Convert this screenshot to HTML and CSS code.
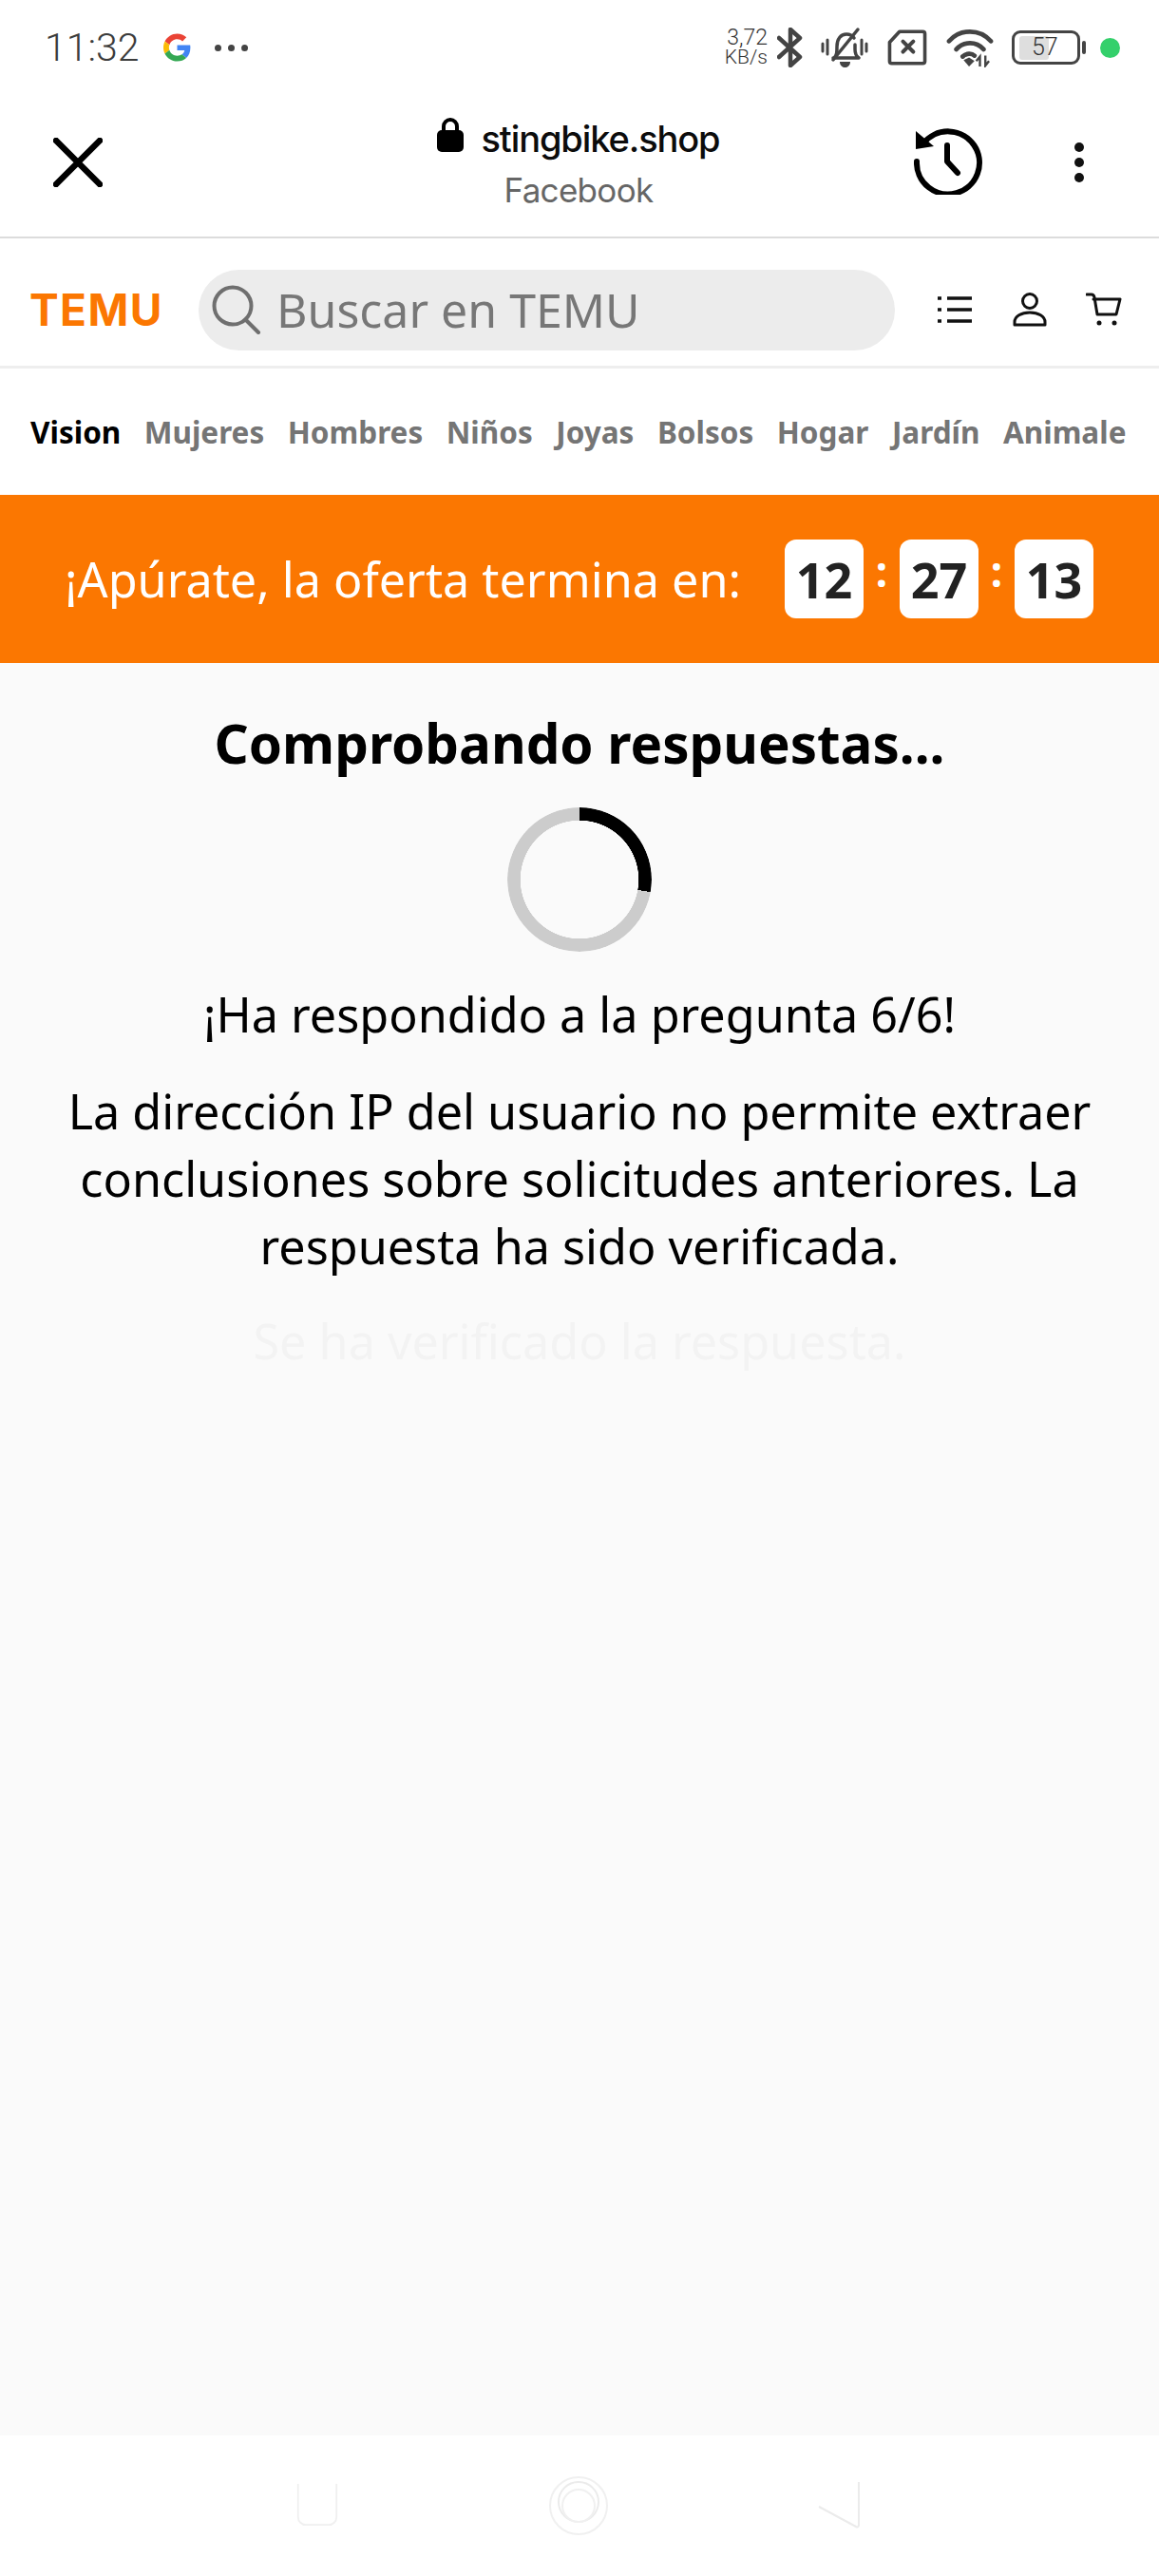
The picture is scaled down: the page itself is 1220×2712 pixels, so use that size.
FILE: index.html
```html
<!DOCTYPE html>
<html lang="es">
<head>
<meta charset="utf-8">
<title>TEMU</title>
<link rel="stylesheet" href="styles.css">
</head>
<body>
<div class="page">
  <div class="status">
    <div class="status-left">
      <span class="clock">11:32</span>
      <svg class="g-logo" viewBox="0 0 48 48"><path fill="#EA4335" d="M24 9.500c3.500 0 6.700 1.200 9.200 3.600l6.900-6.900C35.900 2.400 30.500 0 24 0 14.600 0 6.500 5.400 2.600 13.200l8 6.200C12.400 13.700 17.700 9.500 24 9.500z"/><path fill="#4285F4" d="M47 24.500c0-1.600-.1-3.100-.4-4.500H24v9h12.900c-.6 3-2.200 5.400-4.700 7.100l7.700 6C44.400 38.400 47 32 47 24.500z"/><path fill="#FBBC05" d="M10.500 28.600c-.5-1.400-.8-3-.8-4.600s.3-3.200.8-4.600l-8-6.200C.9 16.500 0 20.100 0 24s.9 7.500 2.600 10.800l7.900-6.200z"/><path fill="#34A853" d="M24 48c6.500 0 11.900-2.100 15.900-5.900l-7.700-6c-2.200 1.500-4.900 2.300-8.200 2.300-6.300 0-11.600-4.200-13.500-9.900l-8 6.200C6.500 42.600 14.600 48 24 48z"/></svg>
      <span class="more-dots"><i></i><i></i><i></i></span>
    </div>
    <div class="status-right">
      <span class="speed"><span>3,72</span><span>KB/s</span></span>
      <svg class="i-bt" viewBox="0 0 28 42"><path d="M2 11l22 20-10 9V2l10 9L2 31" fill="none" stroke="#444" stroke-width="4.500" stroke-linejoin="round" stroke-linecap="round"/></svg>
      <svg class="i-bell" viewBox="0 0 50 44"><g fill="none" stroke="#444" stroke-linecap="round" stroke-linejoin="round"><path stroke-width="3.500" d="M14 33c3-3 3-6 3-12 0-8 4-13 10-13 4 0 6 1 8 4M36 19v5c0 4 1 7 4 9H13"/><path stroke-width="3.500" d="M13 35L39 3"/><path stroke-width="3" d="M2 18v8M7 14v15M48 18v8M43 14v15"/></g><path d="M20 37h11c0 4-3 6-5.500 6S20 41 20 37z" fill="#444"/></svg>
      <svg class="i-sim" viewBox="0 0 46 42"><path d="M14 2.500h27a2.500 2.500 0 0 1 2.500 2.500v32a2.500 2.500 0 0 1-2.500 2.500H5A2.500 2.500 0 0 1 2.500 37V15z" fill="none" stroke="#444" stroke-width="4" stroke-linejoin="round"/><path d="M18 14l12 12M30 14L18 26" stroke="#444" stroke-width="4.500" stroke-linecap="round"/></svg>
      <svg class="i-wifi" viewBox="0 0 52 44"><g fill="none" stroke="#444" stroke-width="5" stroke-linecap="round"><path d="M3 15C15 1 37 1 49 15"/><path d="M11 24c8-9 22-9 30 0"/><path d="M18 32c4-4 10-4 13-1"/></g><path d="M19 36l6-3 6 4-6 6z" fill="#444"/><path d="M37 43V32l-4 5M43 31v11l4-5" fill="none" stroke="#444" stroke-width="2.500"/></svg>
      <div class="battery"><div class="battery-body"><div class="battery-fill"></div><span class="battery-num">57</span></div><div class="battery-nub"></div></div>
      <span class="green-dot"></span>
    </div>
  </div>

  <div class="browser-bar">
    <svg class="i-close" viewBox="0 0 52 52"><path d="M3 3l46 46M49 3L3 49" stroke="#000" stroke-width="6.500" stroke-linecap="round"/></svg>
    <div class="url">
      <div class="url-main">
        <svg class="i-lock" viewBox="0 0 28 36"><path d="M7 16V9a7 7 0 0 1 14 0v7" fill="none" stroke="#000" stroke-width="4"/><rect y="13" width="28" height="23" rx="5" fill="#000"/></svg>
        <span class="domain">stingbike.shop</span>
      </div>
      <div class="referrer">Facebook</div>
    </div>
    <svg class="i-history" viewBox="0 0 72 72"><path d="M10 18A33 33 0 1 1 3 37" fill="none" stroke="#000" stroke-width="6" stroke-linecap="round"/><path d="M2 5v19l19-3z" fill="#000"/><path d="M35 20v17l11 12" fill="none" stroke="#000" stroke-width="6" stroke-linecap="round" stroke-linejoin="round"/></svg>
    <span class="kebab"><i></i><i></i><i></i></span>
  </div>

  <header class="site-head">
    <span class="logo">TEMU</span>
    <div class="search">
      <svg class="i-search" viewBox="0 0 52 52"><circle cx="22" cy="22" r="19.500" fill="none" stroke="#6f6f6f" stroke-width="4"/><path d="M36 37l13 13" stroke="#6f6f6f" stroke-width="4" stroke-linecap="round"/></svg>
      <span class="search-text">Buscar en TEMU</span>
    </div>
    <div class="head-icons">
      <svg class="i-list" viewBox="0 0 36 30"><path d="M10 3h26M10 15h26M10 27h26" stroke="#111" stroke-width="3.500"/><path d="M0 3h4M0 15h4M0 27h4" stroke="#111" stroke-width="3.500"/></svg>
      <svg class="i-user" viewBox="0 0 36 36"><circle cx="18" cy="9" r="7.500" fill="none" stroke="#111" stroke-width="3"/><path d="M2 34v-3c0-6 7-10 16-10s16 4 16 10v3z" fill="none" stroke="#111" stroke-width="3" stroke-linejoin="round"/></svg>
      <svg class="i-cart" viewBox="0 0 38 36"><path d="M1 2h5c2 0 2.500 1 3 3l3 18h20l4-16H8" fill="none" stroke="#111" stroke-width="3" stroke-linejoin="round" stroke-linecap="round"/><circle cx="14" cy="32" r="2.500" fill="#111"/><circle cx="30" cy="32" r="2.500" fill="#111"/></svg>
    </div>
  </header>

  <nav class="cats">
    <span class="cat active">Vision</span>
    <span class="cat">Mujeres</span>
    <span class="cat">Hombres</span>
    <span class="cat">Niños</span>
    <span class="cat">Joyas</span>
    <span class="cat">Bolsos</span>
    <span class="cat">Hogar</span>
    <span class="cat">Jardín</span>
    <span class="cat">Animale</span>
  </nav>

  <div class="offer">
    <span class="offer-text">¡Apúrate, la oferta termina en:</span>
    <div class="timer">
      <span class="digit">12</span><span class="colon">:</span>
      <span class="digit">27</span><span class="colon">:</span>
      <span class="digit">13</span>
    </div>
  </div>

  <main class="content">
    <h1 class="title">Comprobando respuestas...</h1>
    <div class="spinner"></div>
    <p class="answered">¡Ha respondido a la pregunta 6/6!</p>
    <p class="desc">La dirección IP del usuario no permite extraer conclusiones sobre solicitudes anteriores. La respuesta ha sido verificada.</p>
    <p class="verified">Se ha verificado la respuesta.</p>
  </main>

  <footer class="sys-nav">
    <svg class="i-nav-square" viewBox="0 0 50 52"><path d="M3 2v38a9 9 0 0 0 9 9h26a9 9 0 0 0 9-9V2" fill="#fff" stroke="#f0f0f0" stroke-width="2"/></svg>
    <svg class="i-nav-circle" viewBox="0 0 64 64"><circle cx="32" cy="32" r="30" fill="none" stroke="#f0f0f0" stroke-width="2"/><circle cx="32" cy="28" r="21" fill="none" stroke="#ebebeb" stroke-width="2"/><circle cx="32" cy="32" r="17" fill="none" stroke="#f0f0f0" stroke-width="2"/></svg>
    <svg class="i-nav-back" viewBox="0 0 46 52"><path d="M2 28l39 21c2 1 3 0 3-2V2" fill="none" stroke="#ebebeb" stroke-width="2"/></svg>
  </footer>
</div>
</body>
</html>
```
FILE: styles.css
```css
* { box-sizing: border-box; }
html, body { margin: 0; padding: 0; background: #fff; }
body { font-family: "Noto Sans", "Open Sans", sans-serif; }
.page { width: 1220px; height: 2712px; display: flex; flex-direction: column; overflow: hidden; }

/* status bar */
.status { height: 100px; flex: none; display: flex; justify-content: space-between; align-items: center; padding: 0 41px 0 47px; }
.status-left { display: flex; align-items: center; }
.clock { font: 300 41px/1 Roboto, sans-serif; color: #3c3c3c; width: 125px; }
.g-logo { width: 29px; height: 32px; }
.more-dots { display: flex; gap: 7px; margin-left: 25px; }
.more-dots i { width: 7px; height: 7px; border-radius: 50%; background: #444; display: block; }
.status-right { display: flex; align-items: center; }
.speed { display: flex; flex-direction: column; align-items: flex-end; width: 46px; font: 300 23px/21px Roboto, sans-serif; color: #333; }
.speed span:last-child { font-size: 21px; }
.i-bt { width: 28px; height: 42px; margin-left: 10px; }
.i-bell { width: 50px; height: 44px; margin-left: 18px; }
.i-sim { width: 46px; height: 38px; margin-left: 18px; }
.i-wifi { width: 52px; height: 42px; margin-left: 17px; }
.battery { display: flex; align-items: center; margin-left: 18px; }
.battery-body { width: 72px; height: 36px; border: 3.5px solid #444; border-radius: 9px; position: relative; display: flex; align-items: center; padding-left: 5px; }
.battery-fill { width: 31px; height: 25px; background: #dedede; border-radius: 3px; }
.battery-num { position: absolute; left: 18px; top: 3px; font: 300 25px/24px Roboto, sans-serif; color: #333; }
.battery-nub { width: 4px; height: 14px; background: #444; border-radius: 2px; margin-left: 2px; }
.green-dot { width: 21px; height: 21px; border-radius: 50%; background: #34d06b; margin-left: 15px; }

/* browser bar */
.browser-bar { height: 151px; flex: none; display: flex; align-items: center; border-bottom: 2px solid #dcdcdc; padding: 0 0 8px 56px; }
.i-close { width: 52px; height: 52px; flex: none; }
.url { width: 700px; margin-left: 151px; display: flex; flex-direction: column; align-items: center; text-align: center; margin-top: 6px; }
.url-main { display: flex; align-items: center; gap: 18px; height: 52px; }
.i-lock { width: 28px; height: 36px; margin-top: -8px; }
.domain { font: 500 38px/52px Inter, Roboto, sans-serif; color: #0c0c0c; letter-spacing: -1.1px; }
.referrer { font: 400 35px/56px Inter, Roboto, sans-serif; color: #666; letter-spacing: -0.7px; }
.i-history { width: 72px; height: 72px; flex: none; margin-left: 3px; margin-top: -4px; }
.kebab { display: flex; flex-direction: column; gap: 6px; margin-left: 97px; }
.kebab i { width: 10px; height: 10px; border-radius: 50%; background: #111; display: block; }

/* site head */
.site-head { height: 137px; flex: none; display: flex; align-items: center; border-bottom: 3px solid #eee; padding: 16px 0 0 31px; background: #fff; }
.logo { font: 700 46px/1 Inter, sans-serif; color: #fb7701; letter-spacing: 1.4px; width: 178px; flex: none; }
.search { width: 733px; height: 85px; border-radius: 43px; background: #ececec; display: flex; align-items: center; padding-left: 14px; flex: none; }
.i-search { width: 52px; height: 52px; flex: none; }
.search-text { font-size: 50px; color: #777; margin-left: 16px; white-space: nowrap; }
.head-icons { display: flex; align-items: center; margin-left: 45px; }
.i-list { width: 36px; height: 30px; }
.i-user { width: 36px; height: 36px; margin-left: 43px; }
.i-cart { width: 38px; height: 36px; margin-left: 41px; }

/* categories */
.cats { height: 133px; flex: none; display: flex; align-items: center; gap: 24.5px; padding: 0 20px 0 32px; background: #fff; white-space: nowrap; }
.cat { font-size: 31.5px; font-weight: 700; color: #757575; flex: none; }
.cat.active { color: #000; }

/* offer banner */
.offer { height: 177px; flex: none; background: #fb7701; display: flex; align-items: center; padding-left: 68px; }
.offer-text { font-size: 50.3px; color: #fff; white-space: nowrap; width: 758px; flex: none; }
.timer { display: flex; align-items: center; }
.digit { width: 83px; height: 83px; border-radius: 12px; background: #fff; color: #222; font-size: 52px; font-weight: 700; display: flex; align-items: center; justify-content: center; }
.colon { width: 38px; text-align: center; color: #fff; font-size: 44px; font-weight: 700; line-height: 1; margin-top: -18px; }

/* content */
.content { flex: 1; background: #fafafa; display: flex; flex-direction: column; align-items: center; padding: 0 60px; text-align: center; }
.title { margin: 43px 0 0; font-size: 56.5px; line-height: 84px; font-weight: 700; color: #000; white-space: nowrap; }
.spinner { width: 152px; height: 152px; margin-top: 25px; border-radius: 50%; background: conic-gradient(#000 15deg 100deg, #ccc 100deg 375deg); -webkit-mask: radial-gradient(farthest-side, transparent calc(100% - 14px), #000 calc(100% - 13.5px)); mask: radial-gradient(farthest-side, transparent calc(100% - 14px), #000 calc(100% - 13.5px)); flex: none; }
.answered { margin: 28px 0 0; font-size: 50.3px; line-height: 76px; color: #000; white-space: nowrap; }
.desc { margin: 28px 0 0; font-size: 50.3px; line-height: 71px; color: #000; width: 1100px; }
.verified { margin: 29px 0 0; font-size: 50.3px; line-height: 71px; color: #f3f3f3; white-space: nowrap; }

/* system nav */
.sys-nav { height: 148px; flex: none; background: #fff; display: flex; align-items: center; padding: 0 0 0 311px; }
.i-nav-square { width: 46px; height: 50px; flex: none; margin-top: -2px; }
.i-nav-circle { width: 64px; height: 64px; flex: none; margin-left: 220px; }
.i-nav-back { width: 46px; height: 52px; flex: none; margin-left: 219px; margin-top: -2px; }
```
